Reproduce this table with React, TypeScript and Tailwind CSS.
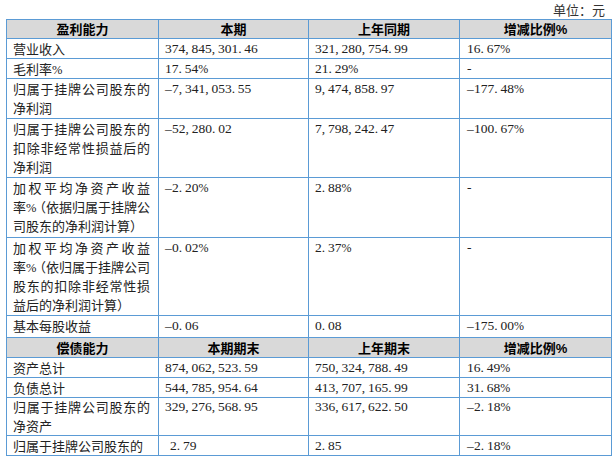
import React from "react";

type Row = {
  label: string[];
  cur: string;
  prev: string;
  change: string;
  h: string;
  lh?: string;
};

const profitRows: Row[] = [
  { label: ["营业收入"], cur: "374,845,301.46", prev: "321,280,754.99", change: "16.67%", h: "h-[20px]" },
  { label: ["毛利率%"], cur: "17.54%", prev: "21.29%", change: "-", h: "h-[20px]" },
  {
    label: ["归属于挂牌公司股东的", "净利润"],
    cur: "-7,341,053.55",
    prev: "9,474,858.97",
    change: "-177.48%",
    h: "h-[40px]",
  },
  {
    label: ["归属于挂牌公司股东的", "扣除非经常性损益后的", "净利润"],
    cur: "-52,280.02",
    prev: "7,798,242.47",
    change: "-100.67%",
    h: "h-[59px]",
  },
  {
    label: ["加权平均净资产收益", "率%（依据归属于挂牌公", "司股东的净利润计算）"],
    cur: "-2.20%",
    prev: "2.88%",
    change: "-",
    h: "h-[60px]",
  },
  {
    label: ["加权平均净资产收益", "率%（依归属于挂牌公司", "股东的扣除非经常性损", "益后的净利润计算）"],
    cur: "-0.02%",
    prev: "2.37%",
    change: "-",
    h: "h-[78px]",
  },
  { label: ["基本每股收益"], cur: "-0.06", prev: "0.08", change: "-175.00%", h: "h-[22px]" },
];

const debtRows: Row[] = [
  { label: ["资产总计"], cur: "874,062,523.59", prev: "750,324,788.49", change: "16.49%", h: "h-[20px]" },
  { label: ["负债总计"], cur: "544,785,954.64", prev: "413,707,165.99", change: "31.68%", h: "h-[20px]" },
  {
    label: ["归属于挂牌公司股东的", "净资产"],
    cur: "329,276,568.95",
    prev: "336,617,622.50",
    change: "-2.18%",
    h: "h-[38px]",
    lh: "leading-[18.5px]",
  },
  { label: ["归属于挂牌公司股东的"], cur: " 2.79", prev: "2.85", change: "-2.18%", h: "h-[20px]" },
];

const Num = ({ v }: { v: string }) => (
  <span className="block font-['Liberation_Serif',serif] text-[13.5px] whitespace-nowrap">
    {v === "-"
      ? "-"
      : v.split("").map((c, i) => {
          if (c === "," || c === ".") return <span key={i} className="inline-block w-[6.2px] leading-none">{c}</span>;
          if (c === "-") return <span key={i} className="inline-block w-[7px] leading-none">–</span>;
          if (c === " ") return <span key={i} className="inline-block w-[5px] leading-none" />;
          if (c === "%") return <span key={i} className="inline-block w-[8px] text-[12px] leading-none">%</span>;
          return c;
        })}
  </span>
);

const Label = ({ lines }: { lines: string[] }) => (
  <div className="pr-[8px]">
    {lines.map((line, i) => (
      <div
        key={i}
        className={`whitespace-nowrap ${i < lines.length - 1 ? "[text-align-last:justify] text-justify" : ""}`}
      >
        {line.split("%").map((part, j, arr) => (
          <React.Fragment key={j}>
            {part}
            {j < arr.length - 1 && (
              <span className="inline-block w-[7px] leading-none font-['Liberation_Serif',serif] text-[12.5px]">%</span>
            )}
          </React.Fragment>
        ))}
      </div>
    ))}
  </div>
);

const cell = "border border-[#5b9bd5] p-0 pl-[6px] align-top";
const head = "border border-[#5b9bd5] p-0 bg-[#d9d9d9] text-center font-bold text-black leading-[18px]";

const HeaderRow = ({ cols, h }: { cols: string[]; h: string }) => (
  <tr className={h}>
    {cols.map((c) => (
      <th key={c} className={head}>
        {c.split("%").map((part, j, arr) => (
          <React.Fragment key={j}>
            {part}
            {j < arr.length - 1 && (
              <span className="inline-block leading-none font-['Liberation_Sans',sans-serif]">%</span>
            )}
          </React.Fragment>
        ))}
      </th>
    ))}
  </tr>
);

const DataRow = ({ row }: { row: Row }) => {
  const c = `${cell} ${row.lh ?? "leading-[19px]"}`;
  return (
    <tr className={row.h}>
      <td className={c}>
        <Label lines={row.label} />
      </td>
      <td className={c}>
        <Num v={row.cur} />
      </td>
      <td className={c}>
        <Num v={row.prev} />
      </td>
      <td className={`${c} pl-[7px]`}>
        <Num v={row.change} />
      </td>
    </tr>
  );
};

const App = () => {
  return (
    <div className="w-[615px] h-[460px] bg-white overflow-hidden font-['Noto_Sans_CJK_SC',sans-serif] text-[13px] text-[#222]">
      <div className="h-[19px] pr-[10px] text-right leading-[19px] text-[#333]">单位：元</div>
      <table className="ml-[6px] w-[605px] table-fixed border-collapse">
        <colgroup>
          <col className="w-[152px]" />
          <col className="w-[150px]" />
          <col className="w-[151px]" />
          <col className="w-[152px]" />
        </colgroup>
        <tbody>
          <HeaderRow cols={["盈利能力", "本期", "上年同期", "增减比例%"]} h="h-[19px]" />
          {profitRows.map((r, i) => (
            <DataRow key={i} row={r} />
          ))}
          <HeaderRow cols={["偿债能力", "本期期末", "上年期末", "增减比例%"]} h="h-[20px]" />
          {debtRows.map((r, i) => (
            <DataRow key={i} row={r} />
          ))}
        </tbody>
      </table>
    </div>
  );
};

export default App;
